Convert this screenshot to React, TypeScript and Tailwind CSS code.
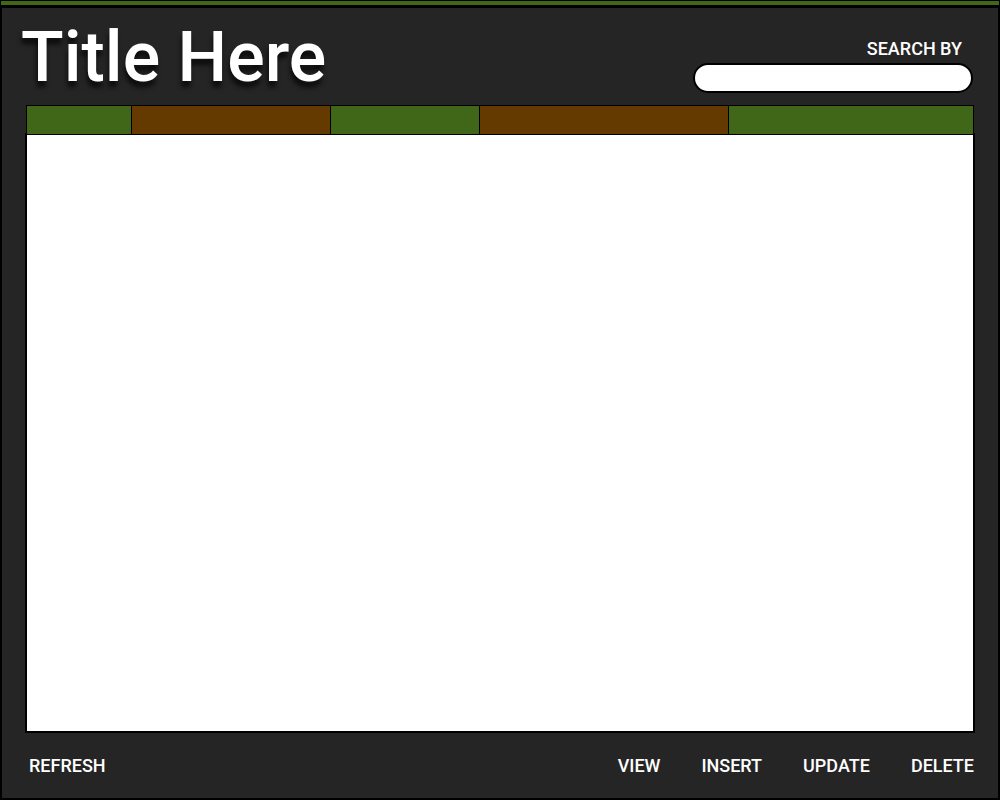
const columns = [
  { label: "Column 1", style: "w-[11.08%] bg-[#406618]" },
  { label: "Column 2", style: "w-[20.99%] bg-[#653a00]" },
  { label: "Column 3", style: "w-[15.72%] bg-[#406618]" },
  { label: "Column 4", style: "w-[26.27%] bg-[#653a00]" },
  { label: "Column 5", style: "border-r bg-[#406618]" },
];

function ActionButton({ label }: { label: string }) {
  return (
    <button type="button" className="cursor-pointer text-lg leading-6 font-medium">
      {label}
    </button>
  );
}

export default function App() {
  return (
    <div className="flex min-h-screen flex-col bg-black font-['Roboto','Liberation_Sans',sans-serif] text-white">
      <div className="mx-px mt-px mb-[3px] h-1 bg-[#406618]" />
      <div className="mx-0.5 mb-0.5 flex flex-1 flex-col bg-[#252525] px-[23px]">
        <header className="flex h-[97px] items-start justify-between">
          <h1 className="-ml-1 pt-[13px] text-[70px] leading-[72px] font-medium whitespace-nowrap [text-shadow:-1px_6px_5px_rgba(0,0,0,0.7)]">
            Title Here
          </h1>
          <form role="search" className="mr-0.5 flex w-[280px] flex-col pt-[29px]" onSubmit={(e) => e.preventDefault()}>
            <label htmlFor="search" className="mr-[11px] self-end text-lg leading-6 font-medium">
              SEARCH BY
            </label>
            <input
              id="search"
              type="search"
              className="mt-0.5 h-[30px] w-full rounded-full border-2 border-black bg-white px-3 text-base text-black outline-none"
            />
          </form>
        </header>

        <main className="flex flex-1 flex-col">
          <div className="z-10 -mb-0.5 px-px">
            <table className="w-full table-fixed border-separate border-spacing-0">
              <thead>
                <tr>
                  {columns.map((column) => (
                    <th
                      key={column.label}
                      scope="col"
                      aria-label={column.label}
                      className={`h-[30px] border-y border-l border-black p-0 ${column.style}`}
                    />
                  ))}
                </tr>
              </thead>
            </table>
          </div>
          <div className="flex-1 border-2 border-black bg-white" />
        </main>

        <footer className="flex h-[65px] items-center justify-between pr-px pl-1">
          <ActionButton label="REFRESH" />
          <div className="flex gap-[41px]">
            <ActionButton label="VIEW" />
            <ActionButton label="INSERT" />
            <ActionButton label="UPDATE" />
            <ActionButton label="DELETE" />
          </div>
        </footer>
      </div>
    </div>
  );
}
